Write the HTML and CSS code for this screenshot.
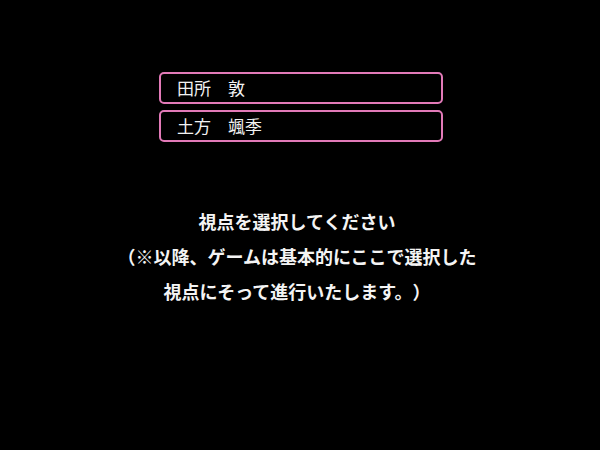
FILE: index.html
```html
<!DOCTYPE html>
<html lang="ja">
<head>
<meta charset="utf-8">
<link rel="stylesheet" href="styles.css">
</head>
<body>
<div class="screen">
  <div class="choices">
    <div class="choice">田所　敦</div>
    <div class="choice">土方　颯季</div>
  </div>
  <div class="message">
    <p>視点を選択してください</p>
    <p>（※以降、ゲームは基本的にここで選択した</p>
    <p>視点にそって進行いたします。）</p>
  </div>
</div>
</body>
</html>
```
FILE: styles.css
```css
html, body {
  margin: 0;
  padding: 0;
  background: #000;
}
.screen {
  width: 600px;
  height: 450px;
  background: #000;
  overflow: hidden;
  font-family: "Noto Sans CJK JP", "Noto Sans", sans-serif;
  text-spacing-trim: space-all;
}
.choices {
  display: flex;
  flex-direction: column;
  gap: 6px;
  margin-left: 159px;
  padding-top: 72px;
  width: 284px;
}
.choice {
  box-sizing: border-box;
  height: 32px;
  border: 2px solid #e27ab8;
  border-radius: 5px;
  color: #f2f2f2;
  font-size: 17px;
  line-height: 28px;
  padding-left: 16px;
}
.message {
  margin-top: 62px;
  padding-right: 6px;
  text-align: center;
  color: #f4f4f4;
  font-size: 18px;
  font-weight: 700;
  line-height: 35px;
}
.message p {
  margin: 0;
}
```
